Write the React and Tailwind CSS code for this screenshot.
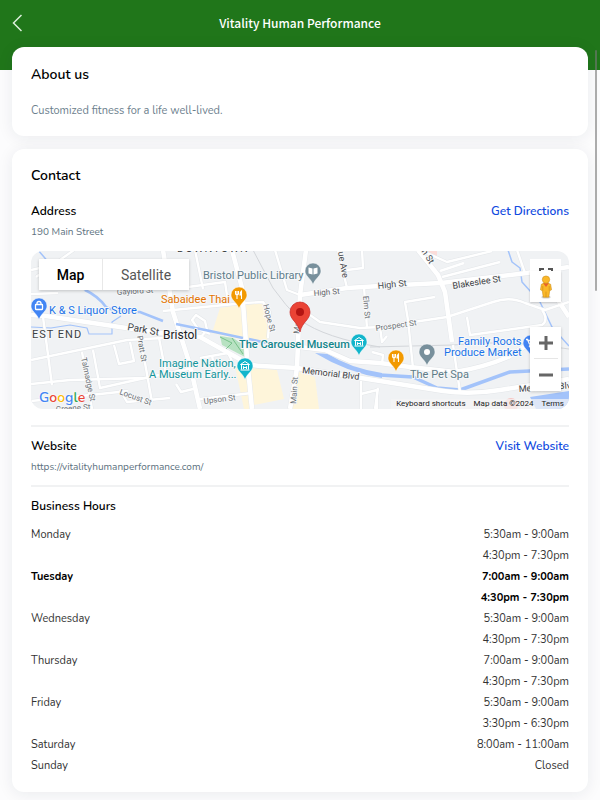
import React from "react";

const hours = [
  { day: "Monday", slots: ["5:30am - 9:00am", "4:30pm - 7:30pm"] },
  { day: "Tuesday", slots: ["7:00am - 9:00am", "4:30pm - 7:30pm"], today: true },
  { day: "Wednesday", slots: ["5:30am - 9:00am", "4:30pm - 7:30pm"] },
  { day: "Thursday", slots: ["7:00am - 9:00am", "4:30pm - 7:30pm"] },
  { day: "Friday", slots: ["5:30am - 9:00am", "3:30pm - 6:30pm"] },
  { day: "Saturday", slots: ["8:00am - 11:00am"] },
  { day: "Sunday", slots: ["Closed"] },
];

const minorRoads = [
  "M31 360L127 340L163 338",
  "M31 384L70 380L145 378L193 368",
  "M31 401L100 394L128 391",
  "M43 317L52 385",
  "M82 352L92 409",
  "M93 350L100 388L145 378",
  "M140 335L152 402",
  "M159 338L166 374",
  "M114 345L119 364L134 361L130 342",
  "M120 390L127 402L170 398",
  "M176 384L181 392L197 388",
  "M31 294L58 293",
  "M36 277L74 250",
  "M31 270L40 268",
  "M163 311L245 303L263 302L270 312L268 338",
  "M173 289L225 282L228 302",
  "M195 250L203 289",
  "M200 338L207 330L205 321L196 315L192 320L198 329L210 334",
  "M200 399L252 393",
  "M200 358L228 353L233 363",
  "M212 355L216 380",
  "M275 250L287 290L300 295",
  "M338 250L347 288",
  "M347 270L363 268L362 250",
  "M364 287L367 328",
  "M300 308L320 322L360 328L380 327L447 317L493 302Q510 296 525 303L545 310L569 302",
  "M413 368L408 320L405 302L435 297",
  "M467 317L470 335L542 325Q549 320 542 310",
  "M442 277L500 262",
  "M464 263L440 271",
  "M517 250L525 273",
  "M453 345L460 392",
  "M372 352L383 355L382 364",
  "M380 327L382 342L387 336",
  "M361 381L361 409",
  "M361 394L377 390L377 409",
  "M378 388L375 409",
  "M420 250L447 262L492 251",
];

const majorRoads = [
  "M31 315L46 316L160 333L200 337L245 362Q252 366 262 366L297 368L380 381L443 391Q470 395 500 390L569 379",
  "M300 347L325 350L350 361L380 363L410 367L455 372Q485 367 508 357L530 343",
  "M163 250L173 312L190 365L200 409",
  "M232 250L242 288L247 358L252 409",
  "M306 250L300 295L297 368L290 409",
  "M300 295L347 288L380 286L441 283L527 273L569 267",
  "M418 250L438 275L445 292L452 342",
  "M545 280L569 317",
];

const labels = [
  { t: "DOWNTOWN", x: 177, y: 252, s: 11, c: "#3c4043", sp: 1 },
  { t: "Gaylord St", x: 117, y: 295, s: 8, c: "#6b7075", r: -4 },
  { t: "Bristol Public Library", x: 203, y: 279, s: 11, c: "#607d8b" },
  { t: "Sabaidee Thai", x: 161, y: 303, s: 11, c: "#e37400" },
  { t: "K & S Liquor Store", x: 49, y: 314, s: 11, c: "#1a73e8" },
  { t: "EST END", x: 32, y: 338, s: 11, c: "#3c4043", sp: 1 },
  { t: "Park St", x: 127, y: 330, s: 10, c: "#3c4043", r: 10 },
  { t: "Bristol", x: 163, y: 339, s: 12, c: "#202124" },
  { t: "Imagine Nation,", x: 159, y: 367, s: 11, c: "#12959b" },
  { t: "A Museum Early...", x: 149, y: 378, s: 11, c: "#12959b" },
  { t: "The Carousel Museum", x: 239, y: 348, s: 11, c: "#12858b", w: 500 },
  { t: "Pratt St", x: 137, y: 336, s: 8, c: "#6b7075", r: 80 },
  { t: "Talmadge St", x: 81, y: 358, s: 8, c: "#6b7075", r: 78 },
  { t: "Locust St", x: 119, y: 394, s: 8, c: "#6b7075", r: 20 },
  { t: "Greene St", x: 56, y: 412, s: 8, c: "#6b7075", r: -4 },
  { t: "Upson St", x: 204, y: 404, s: 8, c: "#6b7075", r: -7 },
  { t: "Hope St", x: 263, y: 305, s: 8, c: "#6b7075", r: 75 },
  { t: "Main St", x: 296, y: 404, s: 8, c: "#6b7075", r: -86 },
  { t: "Main", x: 299, y: 334, s: 8, c: "#6b7075", r: -84 },
  { t: "High St", x: 314, y: 296, s: 8, c: "#5f6368", r: -5 },
  { t: "ue Ave", x: 338, y: 252, s: 9, c: "#4a4e52", r: 80 },
  { t: "Queen St", x: 410, y: 234, s: 9, c: "#4a4e52", r: 57 },
  { t: "Elm St", x: 363, y: 296, s: 8, c: "#6b7075", r: 85 },
  { t: "High St", x: 378, y: 289, s: 9, c: "#4a4e52", r: -6 },
  { t: "Blakeslee St", x: 453, y: 289, s: 9, c: "#3c4043", r: -9 },
  { t: "Prospect St", x: 376, y: 331, s: 8, c: "#6b7075", r: -8 },
  { t: "Memorial Blvd", x: 302, y: 373, s: 9, c: "#3c4043", r: 7 },
  { t: "Memorial Blvd", x: 519, y: 392, s: 9, c: "#3c4043", r: -4 },
  { t: "Family Roots", x: 458, y: 345, s: 11, c: "#1a73e8" },
  { t: "Produce Market", x: 444, y: 356, s: 11, c: "#1a73e8" },
  { t: "The Pet Spa", x: 410, y: 378, s: 11, c: "#5f7c88" },
];

const bag = (
  <g fill="none" stroke="#fff" strokeWidth="1.3">
    <rect x="-3.5" y="-1.5" width="7" height="5" rx=".5" />
    <path d="M-2 -1.5V-2.5A2 2 0 0 1 2 -2.5V-1.5" />
  </g>
);
const fork = (
  <g fill="none" stroke="#fff" strokeWidth="1.1">
    <path d="M-3.5 -4V-1.5Q-3.5 0 -2 0Q-.5 0 -.5 -1.5V-4M-2 -4V4" />
    <path d="M2.5 4V-4Q1 -3 1 0H2.5" fill="#fff" />
  </g>
);
const museum = (
  <g fill="none" stroke="#fff" strokeWidth="1">
    <path d="M-4.5 -1.5L0 -4.5L4.5 -1.5Z M-3.5 -1V3.5M3.5 -1V3.5M-4.5 4H4.5M-1.5 3V0.5L0 2L1.5 .5V3" />
  </g>
);
const book = (
  <path d="M-.5 3.5L-4.5 2.5V-3.5L-.5 -2.5ZM.5 3.5L4.5 2.5V-3.5L.5 -2.5Z" fill="#fff" />
);
const cart = (
  <g fill="none" stroke="#fff" strokeWidth="1.3">
    <path d="M-5 -3.5H-3.5L-1.5 1H3L4.5 -2.5H-3" />
    <circle cx="-1" cy="3.2" r=".6" />
    <circle cx="2.5" cy="3.2" r=".6" />
  </g>
);

function Pin({ x, y, color, children }) {
  return (
    <g transform={`translate(${x} ${y})`}>
      <path d="M-8 0A8 8 0 1 1 8 0C8 5 2.5 7 0 13.5C-2.5 7 -8 5 -8 0Z" fill={color} stroke="#fff" strokeWidth=".5" />
      {children}
    </g>
  );
}

function MapDrawing() {
  return (
    <svg
      viewBox="31 251 538 158"
      preserveAspectRatio="xMidYMid slice"
      className="block h-full w-full bg-[#f0f2f4] font-[Roboto,sans-serif]"
      role="img"
      aria-label="Map of Bristol around 190 Main Street"
    >
      <g fill="#fef5da">
        <path d="M220 308L244 304L247 341L212 333Z" />
        <path d="M246 305L262 303L269 320L267 341L248 341Z" />
        <path d="M249 368L277 370L284 399L254 405Z" />
        <path d="M296 371L315 377L319 409H288Z" />
        <path d="M235 366L249 372L252 409H244Z" />
      </g>
      <path d="M220 336L233 338L244 345L245 357L222 345Z" fill="#b8e2c2" />
      <path d="M220 337L232 343L226 349M232 338L243 354" fill="none" stroke="#67b87b" strokeWidth=".8" />
      <path d="M427 250H437V256L430 258Z" fill="#fbdcd9" />
      <g fill="none" stroke="#d3d6da" strokeWidth="1">
        <path d="M253 250L273 288Q285 305 300 320Q325 338 380 347" />
        <path d="M370 347L453 345Q510 339 569 349" />
      </g>
      <g fill="none" stroke="#a3c3fa" strokeLinejoin="round">
        <path d="M31 327L51 328L70 325L87 328L89 334H112V322L121 316" strokeWidth="1.2" />
        <path d="M38 250L56 271L85 290" strokeWidth="1.5" />
        <path d="M508 250L512 262L520 268L522 282L540 302L552 327L569 346" strokeWidth="1.5" />
        <path d="M380 375L413 377L437 388L460 390L510 372L569 369" strokeWidth="3.5" />
      </g>
      <path d="M315 353L328 354Q350 368 382 373V378Q348 373 315 353Z" fill="#a3c3fa" />
      <path d="M530 397L569 391V409H536Z" fill="#a3c3fa" />
      <circle cx="511" cy="405" r="7" fill="#f7c5c2" />
      <g fill="none" strokeLinejoin="round">
        {minorRoads.map((d) => <path key={d} d={d} stroke="#e3e6e9" strokeWidth="3.4" />)}
        {majorRoads.map((d) => <path key={d} d={d} stroke="#e3e6e9" strokeWidth="5.4" />)}
        {minorRoads.map((d) => <path key={d + "f"} d={d} stroke="#fff" strokeWidth="2.4" />)}
        {majorRoads.map((d) => <path key={d + "f"} d={d} stroke="#fff" strokeWidth="4.6" />)}
      </g>
      <path
        d="M85 290Q98 296 106 307Q113 312 140 312L163 321M176 324L210 331L243 338M249 339L267 343"
        fill="none"
        stroke="#a3c3fa"
        strokeWidth="2.5"
      />
      <g stroke="#f7f8f9" strokeWidth="2" strokeLinejoin="round">
        {labels.map((l) => (
          <text
            key={l.t + l.x}
            transform={`translate(${l.x} ${l.y}) rotate(${l.r || 0})`}
            fontSize={l.s}
            fontWeight={l.w || 400}
            letterSpacing={l.sp || 0}
            fill={l.c}
            paintOrder="stroke"
          >
            {l.t}
          </text>
        ))}
      </g>
      <Pin x={39} y={306} color="#4285f4">{bag}</Pin>
      <Pin x={239} y={295} color="#f29900">{fork}</Pin>
      <Pin x={313} y={271} color="#78909c">{book}</Pin>
      <Pin x={245} y={366} color="#12b5cb">{museum}</Pin>
      <Pin x={359} y={342} color="#12b5cb">{museum}</Pin>
      <Pin x={396} y={358} color="#f29900">{fork}</Pin>
      <Pin x={427} y={352} color="#78909c"><circle r="3" fill="#fff" /></Pin>
      <Pin x={531} y={343} color="#4285f4">{cart}</Pin>
      <path d="M290 312A10 10 0 0 1 310 312C310 320 302 322 300 332C298 322 290 320 290 312Z" fill="#ea4335" stroke="#c5221f" strokeWidth=".7" />
      <circle cx="300" cy="312" r="4" fill="#b31412" />
    </svg>
  );
}

function Pegman() {
  return (
    <svg viewBox="0 0 16 26" className="h-6 w-4" aria-hidden="true">
      <ellipse cx="8" cy="24" rx="5" ry="1.5" fill="#cfcfcf" />
      <path d="M3 10Q8 7 13 10L14 16L12 17L11 24H5L4 17L2 16Z" fill="#fbb829" stroke="#c98a1a" strokeWidth=".6" />
      <path d="M8 18V24M4.5 12V17M11.5 12V17" stroke="#c98a1a" strokeWidth=".7" />
      <path d="M5 9H11L8 13Z" fill="#e8622c" />
      <circle cx="8" cy="5" r="4" fill="#fbb829" stroke="#c98a1a" strokeWidth=".6" />
    </svg>
  );
}

function ContactMap() {
  return (
    <div className="relative mt-[11px] h-[158px] overflow-hidden rounded-xl font-[Roboto,sans-serif]">
      <MapDrawing />
      <div className="absolute top-2 left-2 flex h-[31px] bg-white text-sm shadow-[0_1px_3px_rgba(0,0,0,0.2)]">
        <button type="button" className="w-[64px] border-r border-[#e8e8e8] font-medium text-black">Map</button>
        <button type="button" className="w-[86px] text-[#565656]">Satellite</button>
      </div>
      <button type="button" aria-label="Toggle fullscreen view" className="absolute top-2 right-2 flex h-[31px] w-[31px] justify-center bg-white pt-[9px]">
        <svg viewBox="0 0 14 14" className="h-3.5 w-3.5" fill="none" stroke="#555" strokeWidth="2" aria-hidden="true">
          <path d="M1 5V1H5M9 1H13V5M1 9V13H5M9 13H13V9" />
        </svg>
      </button>
      <button type="button" aria-label="Street View Pegman" className="absolute top-5 right-2 flex h-[31px] w-[31px] items-center justify-center bg-white shadow-[0_1px_2px_rgba(0,0,0,0.2)]">
        <Pegman />
      </button>
      <div className="absolute right-2 bottom-[18px] flex w-[31px] flex-col items-center bg-white text-[#666] shadow-[0_1px_3px_rgba(0,0,0,0.2)]">
        <button type="button" aria-label="Zoom in" className="flex h-8 w-6 items-center justify-center border-b border-[#e6e6e6]">
          <svg viewBox="0 0 14 14" className="h-3.5 w-3.5" stroke="currentColor" strokeWidth="3"><path d="M0 7H14M7 0V14" /></svg>
        </button>
        <button type="button" aria-label="Zoom out" className="flex h-8 w-6 items-center justify-center">
          <svg viewBox="0 0 14 14" className="h-3.5 w-3.5" stroke="currentColor" strokeWidth="3"><path d="M0 7H14" /></svg>
        </button>
      </div>
      <a href="#google" className="absolute bottom-px left-2 font-[Nunito,Lato,sans-serif] text-sm leading-5 font-semibold [text-shadow:0_0_2px_#fff,0_0_2px_#fff]">
        <span className="text-[#4285f4]">G</span>
        <span className="text-[#ea4335]">o</span>
        <span className="text-[#fbbc04]">o</span>
        <span className="text-[#4285f4]">g</span>
        <span className="text-[#34a853]">l</span>
        <span className="text-[#ea4335]">e</span>
      </a>
      <div className="absolute right-0 bottom-0 flex h-[10px] items-center gap-2 bg-[#f5f5f5]/70 px-[5px] text-[8px] leading-none text-[#222]">
        <button type="button">Keyboard shortcuts</button>
        <span>Map data ©2024</span>
        <a href="#terms">Terms</a>
      </div>
    </div>
  );
}

function Card({ className, children }) {
  return (
    <section className={`rounded-xl bg-white px-[19px] shadow-[0_2px_16px_rgba(30,35,60,0.08)] ${className}`}>
      {children}
    </section>
  );
}

function Row({ title, link, href, text }) {
  return (
    <>
      <div className="flex justify-between text-xs leading-5 font-semibold">
        <h3>{title}</h3>
        <a href={href} className="text-[#104ae0]">{link}</a>
      </div>
      <p className="mt-[3px] text-[10px] leading-4 text-[#5d7280]">{text}</p>
    </>
  );
}

export default function App() {
  return (
    <div className="relative min-h-screen bg-[#fcfcfd] font-[Nunito,Lato,sans-serif] text-black">
      <header className="grid h-[70px] grid-cols-[34px_1fr_34px] items-start bg-[#20761a] text-white">
        <button type="button" aria-label="Back" className="flex h-[46px] items-center pl-3">
          <svg viewBox="0 0 10 18" className="h-[18px] w-2.5" fill="none" stroke="#dcefdc" strokeWidth="1.5" aria-hidden="true">
            <path d="M9.5 1L1.5 9L9.5 17" />
          </svg>
        </button>
        <h1 className="text-center font-['Noto_Sans_CJK_SC',sans-serif] text-xs leading-[46px] font-medium">
          Vitality Human Performance
        </h1>
      </header>
      <main className="-mt-[23px] flex flex-col gap-[13px] px-3 pb-2">
        <Card className="pt-[18px] pb-[17px]">
          <h2 className="text-sm leading-5 font-semibold">About us</h2>
          <p className="mt-[18px] text-[11px] leading-4 text-[#6c808d]">Customized fitness for a life well-lived.</p>
        </Card>
        <Card className="pt-[17px] pb-4">
          <h2 className="mb-[15px] text-sm leading-5 font-semibold">Contact</h2>
          <Row title="Address" link="Get Directions" href="#directions" text="190 Main Street" />
          <ContactMap />
          <hr className="mt-4 mb-[9px] border-t-2 border-[#f1f2f3]" />
          <Row title="Website" link="Visit Website" href="#website" text="https://vitalityhumanperformance.com/" />
          <hr className="mt-[10px] mb-[9px] border-t-2 border-[#f1f2f3]" />
          <h3 className="mb-2 text-xs leading-5 font-semibold">Business Hours</h3>
          <table className="w-full text-[11px] leading-[21px] text-[#333]">
            <tbody>
              {hours.map((h) => (
                <tr key={h.day} className={h.today ? "align-top font-bold text-black" : "align-top"}>
                  <th scope="row" className="p-0 text-left [font-weight:inherit]">{h.day}</th>
                  <td className="p-0 text-right">
                    {h.slots.map((s) => <div key={s}>{s}</div>)}
                  </td>
                </tr>
              ))}
            </tbody>
          </table>
        </Card>
      </main>
      <div className="absolute top-[50px] right-[3px] h-[241px] w-0.5 rounded bg-[#777]/60" aria-hidden="true" />
    </div>
  );
}
